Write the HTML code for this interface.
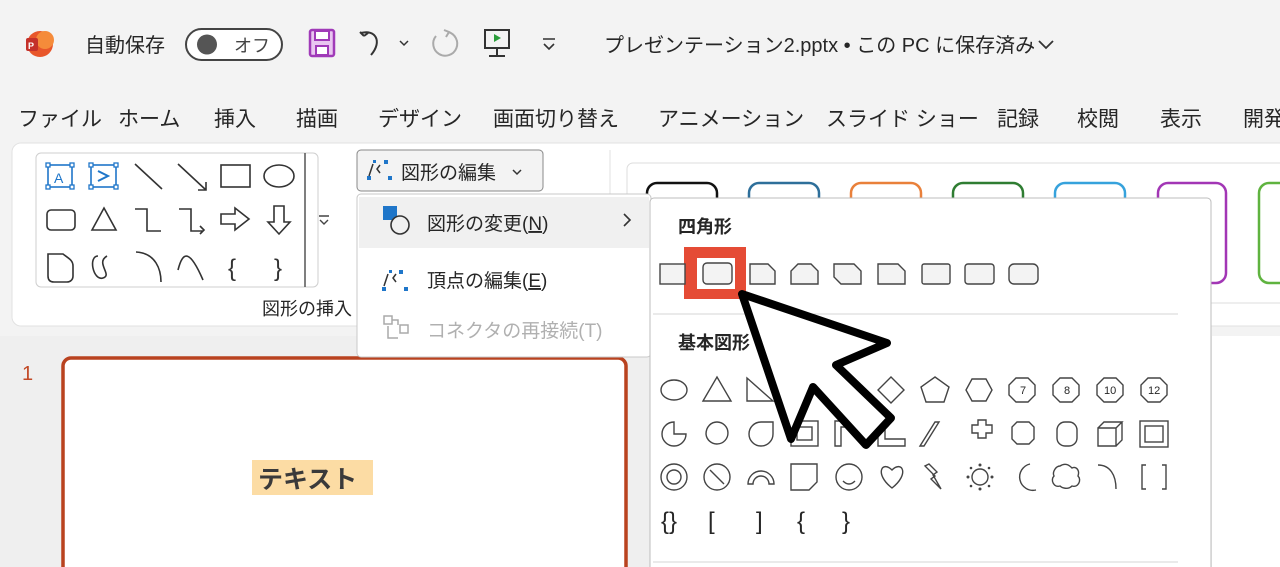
<!DOCTYPE html>
<html><head><meta charset="utf-8"><style>
html,body{margin:0;padding:0;width:1280px;height:567px;overflow:hidden;background:#f3f3f3}
svg{display:block}
text{font-family:"Liberation Sans","Noto Sans CJK JP",sans-serif;fill:#262626}
</style></head><body>
<svg width="1280" height="567" viewBox="0 0 1280 567" xmlns="http://www.w3.org/2000/svg">
<rect width="1280" height="567" fill="#f3f3f3"/>
<!-- title bar -->
<circle cx="40" cy="44" r="13" fill="#e8562a"/><circle cx="45" cy="40" r="9" fill="#f58b3a"/>
<rect x="26" y="38" width="12" height="13" rx="2" fill="#c4312a"/><text x="28" y="49" font-size="9" style="fill:#fff" font-weight="bold">P</text>
<text x="85" y="52" font-size="20">自動保存</text>
<rect x="186" y="29" width="96" height="31" rx="15.5" fill="#fff" stroke="#444" stroke-width="2"/>
<circle cx="207" cy="44.5" r="10" fill="#555"/>
<text x="234" y="52" font-size="18" style="fill:#444">オフ</text>
<rect x="310" y="30" width="24" height="26" fill="#e9c6f0" stroke="#a03ab8" stroke-width="2.5" rx="2"/><rect x="315" y="31" width="14" height="9" fill="#fff" stroke="#a03ab8" stroke-width="2"/><rect x="316" y="46" width="12" height="9" fill="#fff" stroke="#a03ab8" stroke-width="2"/>
<path d="M364 36 l-4 -4 M364 36 l4 -3 M361 33 c14 -4 22 8 10 22" stroke="#333" stroke-width="2" fill="none"/>
<path d="M400 41 l4 4 4 -4" stroke="#333" stroke-width="1.5" fill="none"/>
<path d="M436 36 a12 12 0 1 0 12 -4 M444 30 l5 2 -3 5" stroke="#aaa" stroke-width="2" fill="none"/>
<rect x="485" y="30" width="24" height="18" fill="none" stroke="#333" stroke-width="2"/><path d="M494 34 l7 4 -7 4z" fill="#2a9d3a"/><path d="M497 48 v8 M489 56 h16" stroke="#333" stroke-width="2"/>
<path d="M543 39 h12 M544 44 l5 5 5 -5" stroke="#333" stroke-width="1.6" fill="none"/>
<text x="604" y="52" font-size="20">プレゼンテーション2.pptx • この PC に保存済み</text>
<path d="M1039 41 l7 7 7 -7" stroke="#333" stroke-width="1.8" fill="none"/>
<!-- menu -->
<g font-size="21">
<text x="18" y="126">ファイル</text><text x="118" y="126">ホーム</text><text x="214" y="126">挿入</text><text x="296" y="126">描画</text><text x="378" y="126">デザイン</text><text x="493" y="126">画面切り替え</text><text x="658" y="126">アニメーション</text><text x="826" y="126">スライド ショー</text><text x="997" y="126">記録</text><text x="1077" y="126">校閲</text><text x="1160" y="126">表示</text><text x="1243" y="126">開発</text>
</g>
<!-- ribbon -->
<rect x="12" y="143" width="1290" height="183" rx="9" fill="#fff" stroke="#e2e2e2"/>
<rect x="36" y="153" width="282" height="134" rx="5" fill="#fff" stroke="#cfcfcf"/>
<line x1="305" y1="153" x2="305" y2="287" stroke="#555" stroke-width="1.5"/>
<path d="M319 216 h10 M320 220 l4 4 4 -4" stroke="#444" stroke-width="1.4" fill="none"/>
<g stroke="#333" stroke-width="1.6" fill="none">
<rect x="48" y="165" width="24" height="22" stroke="#1f76c9"/><rect x="91" y="165" width="25" height="22" stroke="#1f76c9"/>
<line x1="135" y1="164" x2="162" y2="189"/><path d="M178 164 L206 190 M206 182 v8 h-8"/>
<rect x="221" y="165" width="29" height="22"/><ellipse cx="279" cy="176" rx="15" ry="11"/>
<rect x="47" y="210" width="28" height="20" rx="4"/><path d="M92 230 l12 -22 12 22z"/><path d="M135 209 h12 v22 h14"/><path d="M179 209 h12 v22 h12 M200 226 l4 4 -4 4"/>
<path d="M221 214 h14 v-6 l14 11 -14 11 v-6 h-14z"/><path d="M274 206 h10 v16 h6 l-11 12 -11 -12 h6z"/>
<path d="M48 254 h15 c5 4 10 6 10 12 v10 c0 4 -3 6 -6 6 h-13 c-4 0 -6 -2 -6 -6z"/><path d="M98 256 c-10 0 -5 25 5 22 c10 -3 -8 -15 4 -22"/>
<path d="M136 252 c20 1 25 18 25 30"/><path d="M178 270 c5 -20 12 -20 25 10"/>
<text x="228" y="276" font-size="24" stroke="none" style="fill:#333">{</text><text x="274" y="276" font-size="24" stroke="none" style="fill:#333">}</text>
</g>
<g fill="#fff" stroke="#1f76c9" stroke-width="1.3"><rect x="46" y="163" width="4" height="4"/><rect x="70" y="163" width="4" height="4"/><rect x="46" y="185" width="4" height="4"/><rect x="70" y="185" width="4" height="4"/><rect x="89" y="163" width="4" height="4"/><rect x="114" y="163" width="4" height="4"/><rect x="89" y="185" width="4" height="4"/><rect x="114" y="185" width="4" height="4"/></g>
<text x="54" y="183" font-size="14" style="fill:#1f76c9">A</text><path d="M98 171 l10 5 -10 5" stroke="#1f76c9" stroke-width="2" fill="none"/>
<text x="262" y="315" font-size="18">図形の挿入</text>
<!-- edit shape btn -->
<rect x="357" y="150" width="186" height="41" rx="4" fill="#f3f3f3" stroke="#888"/>
<g fill="#1f76c9"><rect x="367" y="176" width="4" height="4"/><rect x="388" y="176" width="4" height="4"/><rect x="384" y="160" width="4" height="4"/><rect x="373" y="160" width="3" height="3"/></g>
<path d="M369 176 l4 -12 M380 165 l-3 4 3 4" stroke="#333" stroke-width="1.5" fill="none"/>
<text x="401" y="179" font-size="19">図形の編集</text>
<path d="M513 170 l4 4 4 -4" stroke="#333" stroke-width="1.5" fill="none"/>
<line x1="610" y1="150" x2="610" y2="310" stroke="#e0e0e0"/>
<!-- style gallery -->
<rect x="627" y="163" width="680" height="140" rx="6" fill="#fff" stroke="#ddd"/>
<g fill="#fff" stroke-width="2.5">
<rect x="647" y="183" width="70" height="100" rx="10" stroke="#111"/>
<rect x="749" y="183" width="70" height="100" rx="10" stroke="#2e6f9a"/>
<rect x="851" y="183" width="70" height="100" rx="10" stroke="#e9803a"/>
<rect x="953" y="183" width="70" height="100" rx="10" stroke="#2f7d32"/>
<rect x="1055" y="183" width="70" height="100" rx="10" stroke="#36a2dc"/>
<rect x="1158" y="183" width="68" height="100" rx="10" stroke="#a236b5"/>
<rect x="1259" y="183" width="60" height="100" rx="10" stroke="#5fb33f"/>
</g>
<!-- slide pane -->
<rect x="0" y="336" width="1280" height="231" fill="#efefef"/>
<rect x="1212" y="336" width="68" height="231" fill="#fff"/>
<text x="22" y="380" font-size="20" style="fill:#c24a27">1</text>
<rect x="63" y="358" width="563" height="230" rx="8" fill="#fff" stroke="#b9421f" stroke-width="3.5"/>
<rect x="252" y="460" width="121" height="35" fill="#fcdca4"/>
<text x="258" y="488" font-size="25" font-weight="bold" style="fill:#3a3a3a">テキスト</text>
<!-- dropdown menu -->
<rect x="357" y="194" width="294" height="163" rx="4" fill="#fff" stroke="#c8c8c8"/>
<rect x="359" y="197" width="290" height="51" fill="#f0f0f0"/>
<rect x="383" y="206" width="14" height="14" fill="#1f76c9"/><circle cx="400" cy="225" r="9" fill="#f0f0f0" stroke="#333" stroke-width="1.6"/>
<text x="427" y="230" font-size="19">図形の変更(<tspan text-decoration="underline">N</tspan>)</text>
<path d="M624 214 l6 6 -6 6" stroke="#333" stroke-width="1.6" fill="none"/>
<g fill="#1f76c9"><rect x="382" y="287" width="4" height="4"/><rect x="404" y="287" width="4" height="4"/><rect x="399" y="270" width="4" height="4"/><rect x="389" y="270" width="3" height="3"/></g>
<path d="M384 286 l4 -12 M396 274 l-3 4 3 4" stroke="#333" stroke-width="1.5" fill="none"/>
<text x="427" y="287" font-size="19">頂点の編集(<tspan text-decoration="underline">E</tspan>)</text>
<g stroke="#aaa" stroke-width="1.5" fill="none"><rect x="384" y="316" width="8" height="8"/><rect x="400" y="325" width="8" height="8"/><path d="M388 326 v12 h10 M392 320 h6 v5"/></g>
<text x="427" y="337" font-size="19" style="fill:#b0b0b0">コネクタの再接続(T)</text>
<!-- submenu -->
<rect x="650" y="198" width="561" height="380" rx="4" fill="#fff" stroke="#bdbdbd"/>
<text x="678" y="233" font-size="18" font-weight="bold">四角形</text>
<rect x="684" y="247" width="62" height="52" fill="#e54b35"/>
<rect x="697" y="258" width="38" height="31" fill="#fff"/>
<g fill="#f3f3f3" stroke="#444" stroke-width="1.4">
<rect x="660" y="264" width="25" height="20"/>
<rect x="703" y="263" width="29" height="21" rx="4"/>
<path d="M750 264 h18 l7 7 v13 h-25z"/>
<path d="M798 264 h13 l7 7 v13 h-27 v-13z"/>
<path d="M834 264 h20 l7 7 v13 h-20 l-7 -7z"/>
<path d="M878 264 h20 l7 7 v13 h-27z"/>
<rect x="922" y="264" width="28" height="20" rx="2"/>
<rect x="965" y="264" width="29" height="20" rx="3"/>
<rect x="1009" y="264" width="29" height="20" rx="5"/>
</g>
<line x1="653" y1="314" x2="1178" y2="314" stroke="#d4d4d4"/>
<text x="678" y="349" font-size="18" font-weight="bold">基本図形</text>
<g fill="none" stroke="#444" stroke-width="1.4">
<ellipse cx="674" cy="390" rx="13" ry="10"/>
<path d="M703 401 l14 -24 14 24z"/>
<path d="M747 378 v23 h26z"/>
<path d="M878 390 l13 -13 13 13 -13 13z"/>
<path d="M935 377 l14 10 -5 15 h-18 l-5 -15z"/>
<path d="M972 379 h14 l6 11 -6 11 h-14 l-6 -11z"/>
<path d="M1016 378 h12 l7 7 v10 l-7 7 h-12 l-7 -7 v-10z"/>
<path d="M1060 378 h12 l7 7 v10 l-7 7 h-12 l-7 -7 v-10z"/>
<path d="M1104 378 h12 l7 7 v10 l-7 7 h-12 l-7 -7 v-10z"/>
<path d="M1148 378 h12 l7 7 v10 l-7 7 h-12 l-7 -7 v-10z"/>
<path d="M674 434 v-12 a12 12 0 1 0 12 12z"/>
<path d="M706 434 a11 11 0 1 0 11 -12 c-6 0 -11 5 -11 12z"/>
<path d="M761 422 h12 v12 a12 12 0 1 1 -12 -12z"/>
<rect x="791" y="421" width="27" height="25"/><rect x="797" y="427" width="15" height="13"/>
<path d="M835 421 h26 l-6 6 h-14 v19 h-6z"/>
<path d="M878 421 h7 v18 h20 v7 h-27z"/>
<path d="M920 446 l15 -24 h4 l-15 24z"/>
<path d="M972 425 h6 v-5 h8 v5 h6 v8 h-6 v5 h-8 v-5 h-6z"/>
<path d="M1017 422 h12 l5 5 v12 l-5 5 h-12 l-5 -5 v-12z"/>
<rect x="1057" y="422" width="20" height="24" rx="8"/>
<path d="M1098 428 h18 v18 h-18z M1098 428 l6 -6 h18 l-6 6 M1122 422 v18 l-6 6"/>
<rect x="1140" y="421" width="28" height="26"/><rect x="1145" y="426" width="18" height="16"/>
<circle cx="674" cy="477" r="13"/><circle cx="674" cy="477" r="7"/>
<circle cx="717" cy="477" r="13"/><path d="M710 470 l14 14"/>
<path d="M748 484 a12 12 0 0 1 26 0 h-5 a8 8 0 0 0 -16 0z"/>
<path d="M791 464 h26 v18 l-8 8 h-18z"/>
<circle cx="849" cy="477" r="13"/><path d="M843 481 q6 6 12 0"/>
<path d="M892 488 c-18 -14 -10 -28 0 -18 c10 -10 18 4 0 18z"/>
<path d="M929 464 l8 8 -4 3 8 14 -10 -10 4 -3 -10 -10z"/>
<circle cx="980" cy="477" r="8"/>
<path d="M1030 464 a13 13 0 1 0 6 26 a13 13 0 0 1 -6 -26z"/>
<path d="M1060 466 c6 -4 10 0 12 2 c4 -2 8 2 6 8 c4 4 0 12 -6 10 c-4 4 -10 2 -12 0 c-6 2 -10 -6 -6 -10 c-2 -4 2 -10 6 -10z"/>
<path d="M1098 465 c12 0 18 10 18 24"/>
<path d="M1146 465 h-4 v24 h4 M1162 465 h4 v24 h-4"/>
</g>
<g fill="#444" stroke="none"><circle cx="980" cy="465" r="1.5"/><circle cx="980" cy="489" r="1.5"/><circle cx="968" cy="477" r="1.5"/><circle cx="992" cy="477" r="1.5"/><circle cx="971" cy="468" r="1.3"/><circle cx="989" cy="468" r="1.3"/><circle cx="971" cy="486" r="1.3"/><circle cx="989" cy="486" r="1.3"/></g>
<g font-size="11" style="fill:#444"><text x="1020" y="394">7</text><text x="1064" y="394">8</text><text x="1104" y="394">10</text><text x="1148" y="394">12</text></g>
<g font-size="24" style="fill:#444">
<text x="661" y="529">{}</text><text x="708" y="529">[</text><text x="756" y="529">]</text><text x="797" y="529">{</text><text x="842" y="529">}</text>
</g>
<line x1="653" y1="562" x2="1178" y2="562" stroke="#d4d4d4"/>
<!-- cursor -->
<path d="M742 294 L887 343 L836 365 L891 418 L866 445 L813 387 L791 439 Z" fill="#fff" stroke="#000" stroke-width="8" stroke-linejoin="round"/>
</svg>
</body></html>
